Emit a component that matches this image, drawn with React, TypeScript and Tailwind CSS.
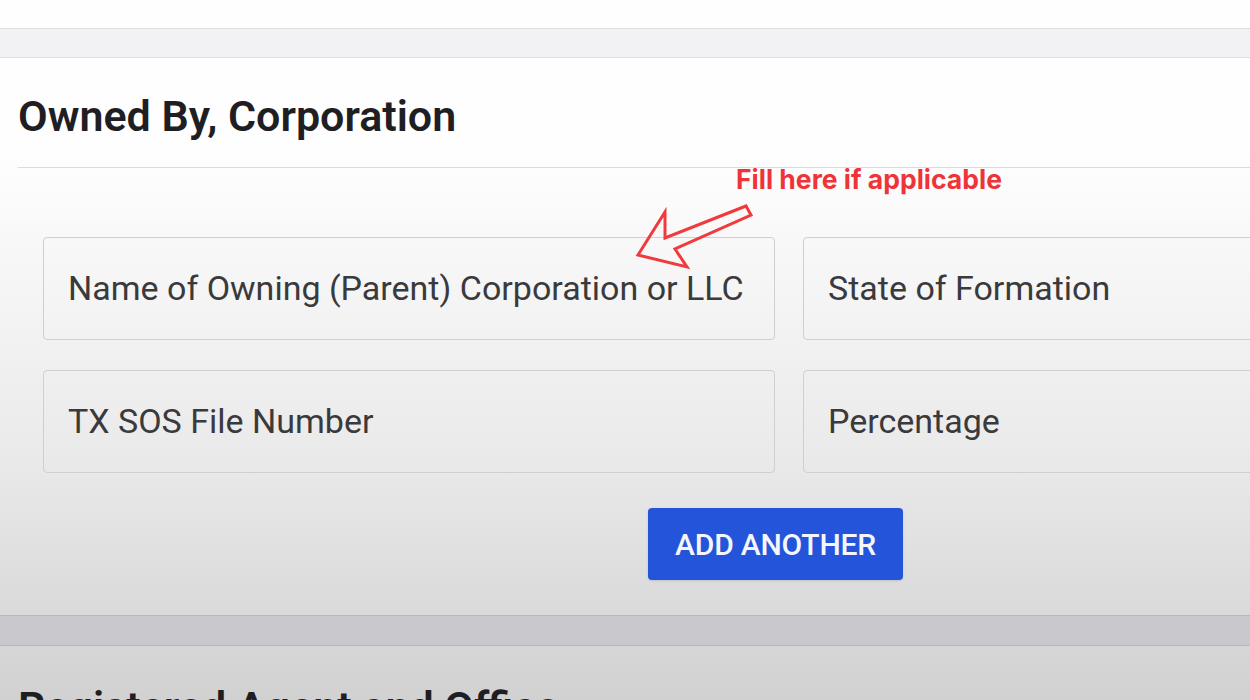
import React from "react";

const fields = [
  "Name of Owning (Parent) Corporation or LLC",
  "State of Formation",
  "TX SOS File Number",
  "Percentage",
];

function Arrow() {
  return (
    <svg
      className="absolute left-0 top-0 pointer-events-none"
      width="1250"
      height="700"
      viewBox="0 0 1250 700"
    >
      <polygon
        points="638,255 665,212 665,238 746,206 751,215 675,249 687,267"
        fill="none"
        stroke="#f03a3d"
        strokeWidth="3"
        strokeLinejoin="miter"
      />
    </svg>
  );
}

export default function App() {
  return (
    <div
      className="relative w-[1250px] h-[700px] overflow-hidden bg-linear-to-b from-[#fefefe] from-[22%] via-[#eaeaea] via-[65%] to-[#d1d1d1]"
      style={{ fontFamily: "Roboto, 'Liberation Sans', sans-serif" }}
    >
      {/* Top strip */}
      <div className="h-[28px]" />
      <div className="h-[30px] bg-[#f2f2f5] border-y border-[#dfdfe2]" />

      {/* Owned By section */}
      <div className="pl-[18px]">
        <div className="pt-[37px] pb-[30px] border-b border-[#dcdcdc]">
          <h2 className="text-[43px] leading-[42px] font-semibold text-[#1f1f23]">
            Owned By, Corporation
          </h2>
        </div>
      </div>

      <div className="pl-[43px] pt-[69px] w-[1535px]">
        <div className="grid grid-cols-[732px_732px] gap-x-[28px] gap-y-[30px]">
          {fields.map((f) => (
            <div
              key={f}
              className="h-[103px] rounded-[4px] border border-[#cfcfcf] flex items-center pl-[24px]"
            >
              <span className="text-[34px] text-[#3a3a3c]">{f}</span>
            </div>
          ))}
        </div>
        <div className="w-[1465px] flex justify-center pt-[35px]">
          <button className="w-[255px] h-[72px] rounded-[4px] bg-[#2354d9] text-[#f4f6fc] text-[30px] font-medium tracking-[-0.2px] shadow-sm">
            ADD ANOTHER
          </button>
        </div>
      </div>

      {/* Divider band */}
      <div className="mt-[35px] h-[31px] bg-[#c9c8cc] border-y border-[#b8b8ba]" />

      <div className="pl-[18px] pt-[40px]">
        <h2 className="text-[43px] leading-[42px] font-semibold text-[#1f1f23]">
          Registered Agent and Office
        </h2>
      </div>

      {/* Annotation */}
      <div
        className="absolute left-[736px] top-[162px] text-[26.5px] leading-[34px] font-bold text-[#ee3438]"
        style={{ fontFamily: "Inter, 'Liberation Sans', sans-serif" }}
      >
        Fill here if applicable
      </div>
      <Arrow />
    </div>
  );
}
